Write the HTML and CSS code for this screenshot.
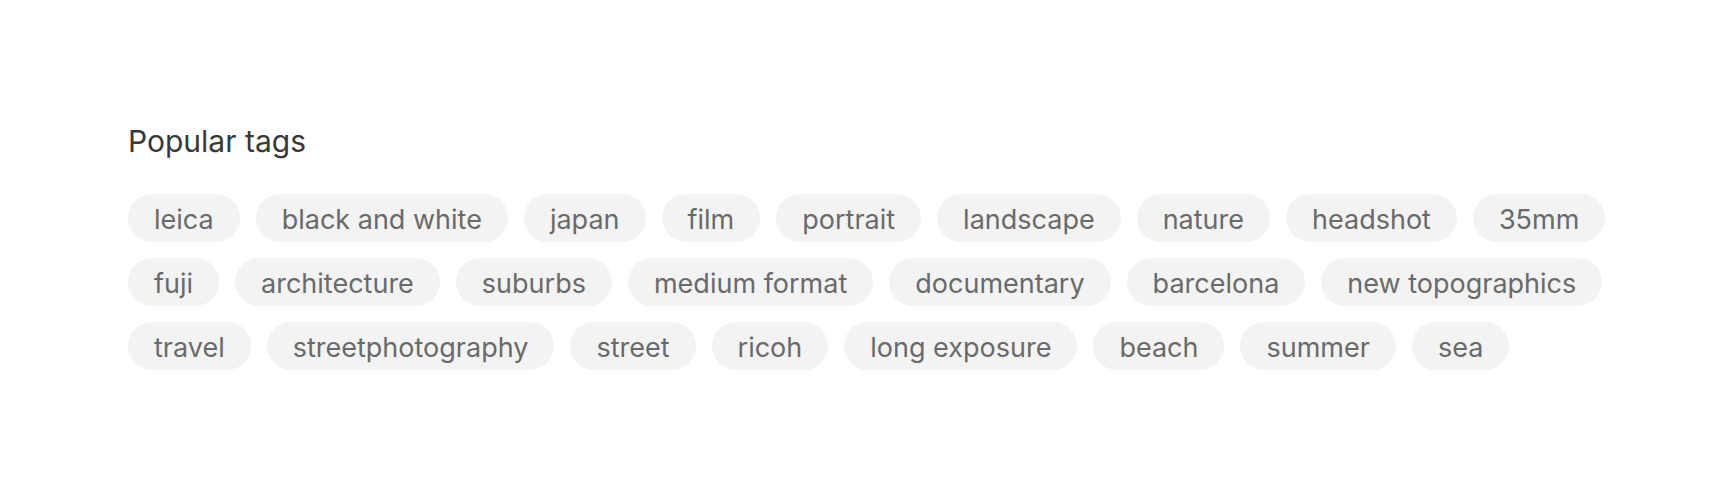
FILE: index.html
```html
<!DOCTYPE html>
<html lang="en">
<head>
    <meta charset="UTF-8">
    <meta name="viewport" content="width=device-width, initial-scale=1.0">
    <title>Popular tags</title>
    <link rel="stylesheet" href="styles.css">
</head>
<body>
    <div class="container">
        <h2>Popular tags</h2>
        <div class="tags">
            <a class="tag" href="#">leica</a>
            <a class="tag" href="#">black and white</a>
            <a class="tag" href="#">japan</a>
            <a class="tag" href="#">film</a>
            <a class="tag" href="#">portrait</a>
            <a class="tag" href="#">landscape</a>
            <a class="tag" href="#">nature</a>
            <a class="tag" href="#">headshot</a>
            <a class="tag" href="#">35mm</a>
            <a class="tag" href="#">fuji</a>
            <a class="tag" href="#">architecture</a>
            <a class="tag" href="#">suburbs</a>
            <a class="tag" href="#">medium format</a>
            <a class="tag" href="#">documentary</a>
            <a class="tag" href="#">barcelona</a>
            <a class="tag" href="#">new topographics</a>
            <a class="tag" href="#">travel</a>
            <a class="tag" href="#">streetphotography</a>
            <a class="tag" href="#">street</a>
            <a class="tag" href="#">ricoh</a>
            <a class="tag" href="#">long exposure</a>
            <a class="tag" href="#">beach</a>
            <a class="tag" href="#">summer</a>
            <a class="tag" href="#">sea</a>
        </div>
    </div>
</body>
</html>
```

FILE: styles.css
```css
body {
    font-family: 'Inter', 'Liberation Sans', sans-serif;
    background: #ffffff;
    margin: 0;
}
.container {
    padding: 121px 96px 0 128px;
}
h2 {
    margin: 0 0 33px;
    font-size: 30px;
    line-height: 40px;
    font-weight: normal;
    color: #383838;
}
.tags {
    display: flex;
    flex-wrap: wrap;
    gap: 16px;
}
.tag {
    display: block;
    box-sizing: border-box;
    height: 48px;
    line-height: 44px;
    padding: 4px 26px 0;
    border-radius: 24px;
    background: #f3f3f3;
    color: #6a6a6a;
    font-size: 27px;
    text-decoration: none;
}
```
